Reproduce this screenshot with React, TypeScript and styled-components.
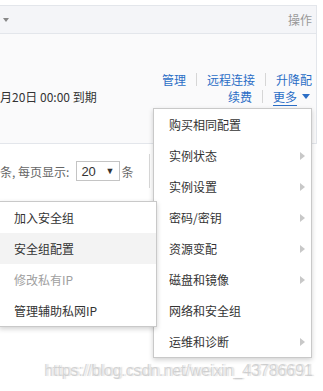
import styled, {createGlobalStyle} from 'styled-components';

const GlobalStyle = createGlobalStyle`
  html, body {
    margin: 0;
    padding: 0;
    background: #fff;
  }
  body {
    font-family: "Noto Sans CJK SC", "Noto Sans", sans-serif;
    font-size: 12px;
    color: #333;
  }
`;

const Page = styled.div`
  position: relative;
  width: 323px;
  height: 391px;
  overflow: hidden;
  padding-top: 5px;
  box-sizing: border-box;
`;

const Table = styled.div`
  width: 317px;
  border-top: 1px solid #e3e6eb;
  border-right: 1px solid #e3e6eb;
  box-sizing: border-box;
`;

const HeaderRow = styled.div`
  display: flex;
  align-items: center;
  justify-content: space-between;
  height: 27px;
  padding: 0 4px 0 3px;
  background: #f4f5f8;
  border-bottom: 1px solid #e3e6eb;
`;

const Caret = styled.span`
  width: 0;
  height: 0;
  border-left: 3.5px solid transparent;
  border-right: 3.5px solid transparent;
  border-top: 4px solid #888;
`;

const HeadCell = styled.span`
  color: #999;
  line-height: 17px;
`;

const BodyRow = styled.div`
  display: flex;
  align-items: flex-end;
  justify-content: space-between;
  height: 110px;
  padding: 38px 4px 38px 0;
  box-sizing: border-box;
  background: #fafafb;
  border-bottom: 1px solid #e3e6eb;
`;

const Expire = styled.span`
  line-height: 17px;
  color: #333;
`;

const Actions = styled.div`
  display: flex;
  flex-direction: column;
  align-items: flex-end;
`;

const ActionLine = styled.div`
  display: flex;
  align-items: center;
  height: 17px;
`;

const Link = styled.a<{$more?: boolean}>`
  color: #2b6ec6;
  text-decoration: ${(p) => (p.$more ? 'underline' : 'none')};
  text-underline-offset: 3px;
  display: inline-flex;
  align-items: center;
  line-height: 17px;
`;

const Sep = styled.span`
  width: 1px;
  height: 13px;
  background: #d6d6d6;
  margin: 0 10px;
`;

const MoreCaret = styled.span`
  margin-left: 5px;
  margin-right: 2px;
  width: 0;
  height: 0;
  border-left: 4px solid transparent;
  border-right: 4px solid transparent;
  border-top: 5px solid #2b6ec6;
`;

const Pager = styled.div`
  display: flex;
  align-items: center;
  height: 54px;
  color: #666;
`;

const Select = styled.div`
  display: flex;
  align-items: center;
  justify-content: space-between;
  width: 44px;
  height: 20px;
  box-sizing: border-box;
  border: 1px solid #c4c4c4;
  margin: 0 1px 0 7px;
  padding: 0 5px 0 4px;
  color: #333;
  font-family: "Liberation Sans", "Noto Sans CJK SC", sans-serif;
  font-size: 13px;
`;

const SelectArrow = styled.span`
  font-size: 9px;
  color: #333;
`;

const PagerBox = styled.div`
  margin-left: 16px;
  width: 40px;
  height: 34px;
  border-left: 1px solid #d9d9d9;
`;

const Watermark = styled.div`
  position: absolute;
  left: 44px;
  top: 362px;
  font-family: "Liberation Sans", sans-serif;
  font-size: 16px;
  letter-spacing: -0.1px;
  color: rgba(190, 190, 190, 0.6);
  text-shadow: 2px 0 1px rgba(200, 200, 200, 0.5);
  white-space: nowrap;
`;

const Menu = styled.ul<{$left: number; $top: number; $width: number}>`
  position: absolute;
  left: ${(p) => p.$left}px;
  top: ${(p) => p.$top}px;
  width: ${(p) => p.$width}px;
  margin: 0;
  padding: 0;
  list-style: none;
  background: #fff;
  border: 1px solid #c9c9c9;
  box-shadow: 0 2px 5px rgba(0, 0, 0, 0.18);
  box-sizing: border-box;
`;

const Item = styled.li<{$active?: boolean; $disabled?: boolean}>`
  display: flex;
  align-items: center;
  justify-content: space-between;
  height: 31px;
  padding: 0 6px 0 ${(p) => (p.$disabled !== undefined ? 14 : 15)}px;
  background: ${(p) => (p.$active ? '#f3f3f3' : 'transparent')};
  color: ${(p) => (p.$disabled ? '#a0a0a0' : '#333')};
  white-space: nowrap;
`;

const Arrow = styled.span`
  width: 0;
  height: 0;
  border-top: 4.5px solid transparent;
  border-bottom: 4.5px solid transparent;
  border-left: 5px solid #c8c8c8;
`;

const mainItems = [
  {label: '购买相同配置', sub: false},
  {label: '实例状态', sub: true},
  {label: '实例设置', sub: true},
  {label: '密码/密钥', sub: true},
  {label: '资源变配', sub: true},
  {label: '磁盘和镜像', sub: true},
  {label: '网络和安全组', sub: false},
  {label: '运维和诊断', sub: true},
];

const subItems = [
  {label: '加入安全组', active: false, disabled: false},
  {label: '安全组配置', active: true, disabled: false},
  {label: '修改私有IP', active: false, disabled: true},
  {label: '管理辅助私网IP', active: false, disabled: false},
];

export default function App() {
  return (
    <>
      <GlobalStyle />
      <Page>
        <Table>
          <HeaderRow>
            <Caret />
            <HeadCell>操作</HeadCell>
          </HeaderRow>
          <BodyRow>
            <Expire>月20日 00:00 到期</Expire>
            <Actions>
              <ActionLine>
                <Link>管理</Link>
                <Sep />
                <Link>远程连接</Link>
                <Sep />
                <Link>升降配</Link>
              </ActionLine>
              <ActionLine>
                <Link>续费</Link>
                <Sep />
                <Link $more>更多</Link>
                <MoreCaret />
              </ActionLine>
            </Actions>
          </BodyRow>
        </Table>
        <Pager>
          <span>条, 每页显示:</span>
          <Select>
            <span>20</span>
            <SelectArrow>▼</SelectArrow>
          </Select>
          <span>条</span>
          <PagerBox />
        </Pager>
        <Watermark>https://blog.csdn.net/weixin_43786691</Watermark>
        <Menu $left={153} $top={108} $width={159}>
          {mainItems.map((it) => (
            <Item key={it.label}>
              {it.label}
              {it.sub && <Arrow />}
            </Item>
          ))}
        </Menu>
        <Menu $left={-1} $top={201} $width={158}>
          {subItems.map((it) => (
            <Item key={it.label} $active={it.active} $disabled={it.disabled}>
              {it.label}
            </Item>
          ))}
        </Menu>
      </Page>
    </>
  );
}
